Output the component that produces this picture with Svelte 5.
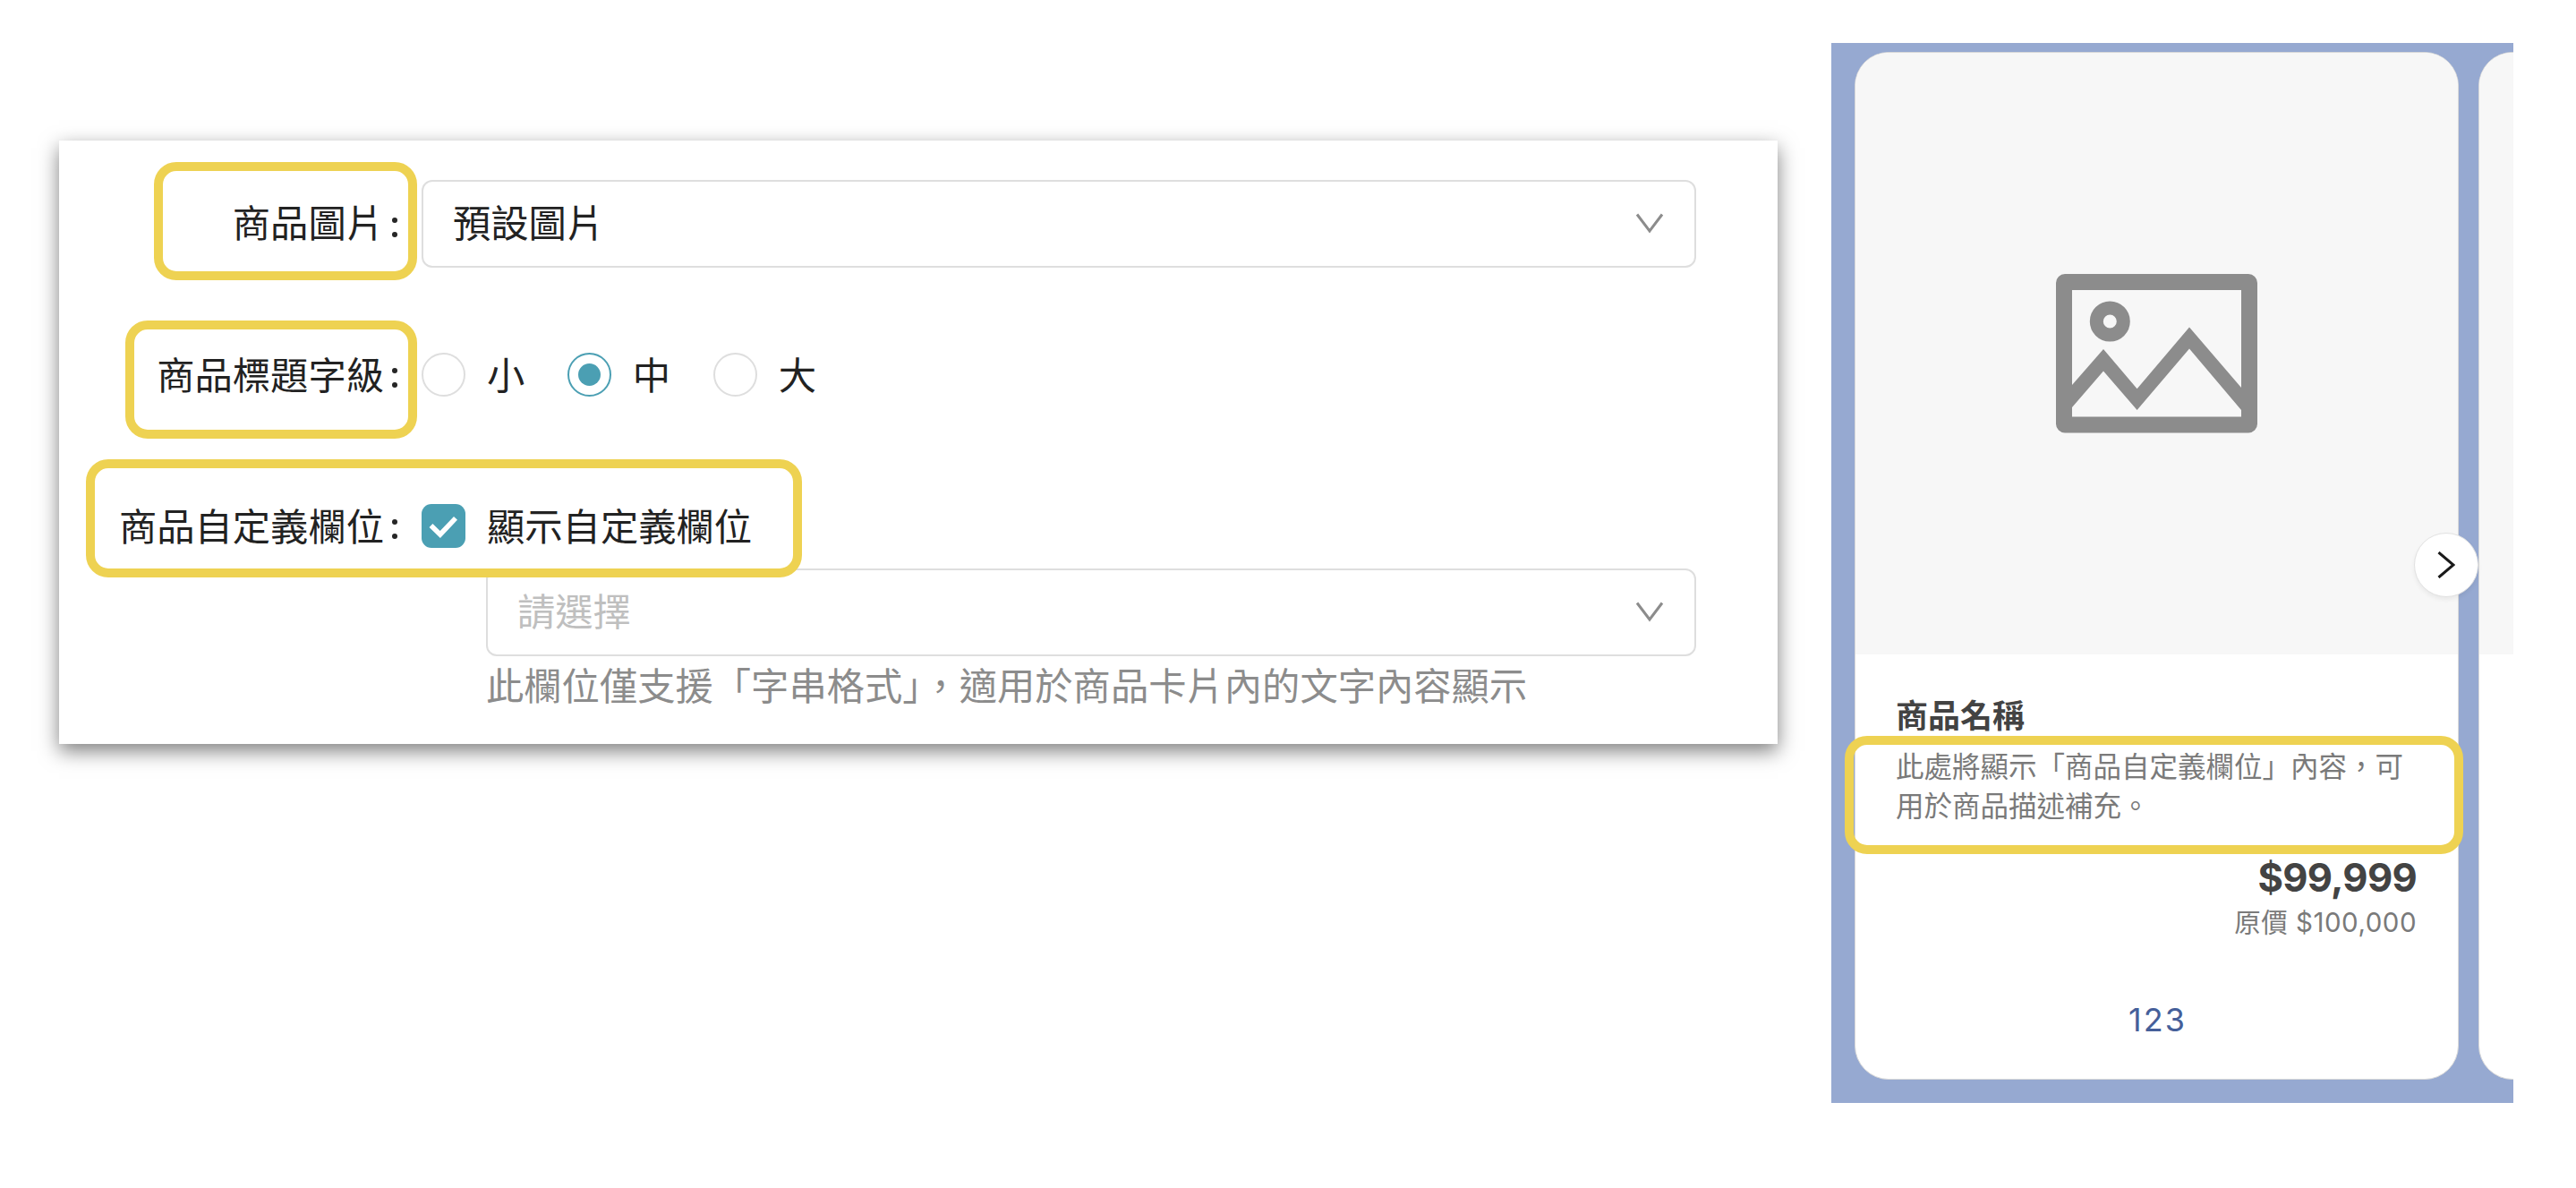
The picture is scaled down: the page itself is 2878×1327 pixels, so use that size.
<script>
  const sizes = [
    { label: '小', checked: false },
    { label: '中', checked: true },
    { label: '大', checked: false }
  ];
</script>

{#snippet chevron()}
  <svg class="chevron" viewBox="0 0 32 24" aria-hidden="true">
    <path d="M2 1.5 16 20 30 1.5" />
  </svg>
{/snippet}

<main>
  <section class="panel">
    <div class="row row-image">
      <div class="label"><span>商品圖片</span><i class="colon"></i></div>
      <div class="select"><span>預設圖片</span>{@render chevron()}</div>
      <div class="mark mark-image"></div>
    </div>

    <div class="row row-size">
      <div class="label"><span>商品標題字級</span><i class="colon"></i></div>
      <div class="radios">
        {#each sizes as s}
          <div class="option">
            <span class="radio" class:checked={s.checked}></span>
            <span class="text">{s.label}</span>
          </div>
        {/each}
      </div>
      <div class="mark mark-size"></div>
    </div>

    <div class="row row-custom">
      <div class="label"><span>商品自定義欄位</span><i class="colon"></i></div>
      <div class="option">
        <span class="checkbox">
          <svg viewBox="0 0 49 49" aria-hidden="true"><path d="M10.500 24 20.800 34 38 15.800" /></svg>
        </span>
        <span class="text">顯示自定義欄位</span>
      </div>
      <div class="mark mark-custom"></div>
    </div>

    <div class="sub">
      <div class="select"><span class="placeholder">請選擇</span>{@render chevron()}</div>
      <p class="hint">此欄位僅支援「字串格式」，適用於商品卡片內的文字內容顯示</p>
    </div>
  </section>

  <section class="preview">
    <div class="track">
      <article class="card">
        <div class="picture">
          <svg viewBox="0 0 225 178" aria-hidden="true">
            <rect x="9" y="9" width="207" height="159.500" rx="1" />
            <circle cx="60.300" cy="53" r="15" />
            <path class="fill" d="M18 124 53 84 90.600 128.300 149 59.500 207 127V152L149 83.500 90.600 152 53 108.500 18 149Z" />
          </svg>
        </div>
        <div class="body">
          <h2>商品名稱</h2>
          <p class="desc">此處將顯示「商品自定義欄位」內容，可用於商品描述補充。</p>
          <strong class="price">$99,999</strong>
          <span class="was">原價 $100,000</span>
          <span class="action">123</span>
          <div class="mark mark-desc"></div>
        </div>
      </article>
      <article class="card">
        <div class="picture"></div>
      </article>
    </div>
    <button class="next" aria-label="next">
      <svg viewBox="0 0 20 30" aria-hidden="true"><path d="M1.500 1 18 15 1.500 29" /></svg>
    </button>
  </section>
</main>

<style>
  :global(body) {
    background: #fff;
  }
  * {
    box-sizing: border-box;
  }
  main {
    display: flex;
    align-items: flex-start;
    gap: 60px;
    width: 2878px;
    height: 1327px;
    padding: 48px 0 0 66px;
    overflow: hidden;
    font-family: 'Noto Sans CJK TC', sans-serif;
    font-size: 42.3px;
    line-height: 60px;
    color: #222;
  }
  .panel {
    flex: none;
    width: 1920px;
    height: 674px;
    margin-top: 109px;
    padding: 44px 91px 0 0;
    background: #fff;
    box-shadow: 0 8px 21px rgba(0, 0, 0, 0.5);
  }
  .row {
    position: relative;
    display: flex;
    align-items: center;
    white-space: nowrap;
  }
  .row-image {
    height: 98px;
  }
  .row-size {
    height: 60px;
    margin-top: 89px;
  }
  .row-custom {
    height: 60px;
    margin-top: 109px;
  }
  .label {
    display: flex;
    flex: none;
    justify-content: flex-end;
    align-items: center;
    gap: 9px;
    width: 405px;
    padding-right: 25px;
  }
  .label span,
  .text {
    margin-top: -3px;
  }
  .row-image .label span {
    margin-top: -6px;
  }
  .select span {
    margin: -7px 0 0 -1px;
  }
  .colon {
    display: flex;
    flex-direction: column;
    justify-content: space-between;
    width: 8px;
    height: 22px;
    margin-top: 7px;
  }
  .colon::before,
  .colon::after {
    content: '';
    width: 6px;
    height: 6px;
    border-radius: 50%;
    background: #262626;
  }
  .select {
    display: flex;
    flex: 1;
    justify-content: space-between;
    align-items: center;
    height: 98px;
    padding: 0 34px;
    border: 2px solid #dedede;
    border-radius: 12px;
    background: #fff;
  }
  .chevron {
    width: 32px;
    height: 24px;
    fill: none;
    stroke: #8c8c8c;
    stroke-width: 3;
  }
  .placeholder {
    color: #bfbfbf;
  }
  .radios {
    display: flex;
    gap: 47.5px;
  }
  .option {
    display: flex;
    align-items: center;
    gap: 24px;
  }
  .radio {
    display: grid;
    place-items: center;
    width: 49px;
    height: 49px;
    border: 2px solid #dedede;
    border-radius: 50%;
  }
  .radio.checked {
    border-color: #4b9fb3;
  }
  .radio.checked::after {
    content: '';
    width: 25px;
    height: 25px;
    border-radius: 50%;
    background: #4b9fb3;
  }
  .checkbox {
    width: 49px;
    height: 49px;
    border-radius: 11px;
    background: #4b9fb3;
  }
  .checkbox svg {
    display: block;
    fill: none;
    stroke: #fff;
    stroke-width: 5.500;
  }
  .sub {
    margin: 18px 0 0 477px;
  }
  .hint {
    margin: 1px 0 0;
    color: #8c8c8c;
    white-space: nowrap;
  }
  .mark {
    position: absolute;
    z-index: 2;
    height: 132px;
    border: 10px solid #eed252;
    border-radius: 25px;
  }
  .mark-image {
    left: 106px;
    top: -20px;
    width: 294px;
  }
  .mark-size {
    left: 74px;
    top: -30px;
    width: 326px;
  }
  .mark-custom {
    left: 30px;
    top: -44px;
    width: 800px;
  }
  .preview {
    position: relative;
    flex: none;
    width: 762px;
    height: 1184px;
    padding: 10px 0 26px 26px;
    background: #96a9d1;
  }
  .track {
    display: flex;
    gap: 22px;
    width: 736px;
    height: 100%;
    overflow: hidden;
  }
  .card {
    flex: none;
    width: 675px;
    height: 1148px;
    border: 1.500px solid #d9d9d9;
    border-radius: 38px;
    background: #fff;
  }
  .picture {
    display: grid;
    place-items: center;
    height: 672px;
    border-radius: 37px 37px 0 0;
    background: #f7f7f7;
  }
  .picture svg {
    width: 225px;
    height: 178px;
    fill: none;
    stroke: #8c8c8c;
    stroke-width: 18;
    stroke-linejoin: round;
  }
  .picture circle {
    stroke-width: 15;
  }
  .picture .fill {
    fill: #8c8c8c;
    stroke: none;
  }
  .body {
    display: flex;
    flex-direction: column;
    padding: 41px 46px 0 45px;
  }
  h2 {
    margin: 0;
    font-size: 36px;
    line-height: 50px;
    font-weight: 700;
    color: #434343;
  }
  .desc {
    margin: 10px -10px 0 0;
    font-size: 31.500px;
    line-height: 44px;
    color: #7a7a7a;
  }
  .price {
    align-self: flex-end;
    margin-top: 30px;
    font-family: Inter, sans-serif;
    font-size: 43.5px;
    line-height: 60px;
    letter-spacing: -0.7px;
    color: #434343;
  }
  .was {
    align-self: flex-end;
    margin-top: -1px;
    font-family: Inter, 'Noto Sans CJK TC', sans-serif;
    font-size: 29.500px;
    line-height: 42px;
    letter-spacing: 0.5px;
    color: #7a7a7a;
  }
  .action {
    align-self: center;
    margin: 63px 0 0 3px;
    font-family: Inter, sans-serif;
    font-size: 36px;
    line-height: 50px;
    letter-spacing: 2px;
    color: #455f9a;
  }
  .mark-desc {
    left: 15px;
    top: 774px;
    width: 691px;
  }
  .next {
    position: absolute;
    left: 651px;
    top: 547px;
    display: grid;
    place-items: center;
    width: 72px;
    height: 72px;
    padding: 0;
    border: 1.500px solid #e2e2e2;
    border-radius: 50%;
    background: #fff;
    box-shadow: 0 3px 5px rgba(0, 0, 0, 0.06);
  }
  .next svg {
    width: 20px;
    height: 30px;
    fill: none;
    stroke: #1a1a1a;
    stroke-width: 3;
  }
</style>
